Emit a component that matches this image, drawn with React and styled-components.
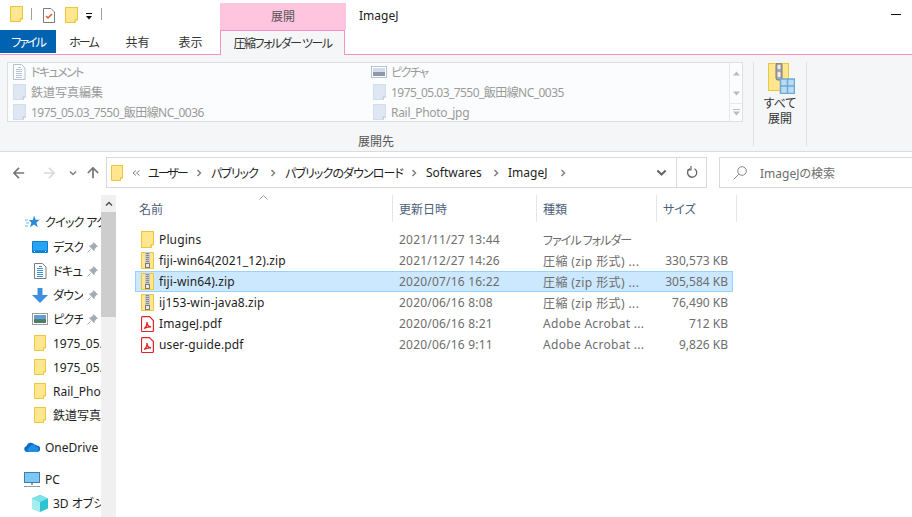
import React from 'react';
import styled, { createGlobalStyle } from 'styled-components';

const GlobalStyle = createGlobalStyle`
    html, body {
        margin: 0;
        padding: 0;
        background: #fff;
        overflow: hidden;
    }
    * {
        box-sizing: border-box;
    }
`;

const FONT = `"Noto Sans", "Noto Sans CJK JP", sans-serif`;

const Page = styled.div`
    width: 912px;
    height: 517px;
    display: flex;
    flex-direction: column;
    overflow: hidden;
    font-family: ${FONT};
    font-size: 12px;
    font-feature-settings: "palt";
    color: #1e1e1e;
    background: #fff;
`;

/* title bar */
const TitleBar = styled.div`
    height: 30px;
    padding-top: 3px;
    display: flex;
    align-items: stretch;
`;

const QuickAccess = styled.div`
    width: 220px;
    padding: 3px 0 0 10px;
    display: flex;
    align-items: flex-start;
`;

const QuickIcon = styled.span`
    display: flex;
    margin-top: ${p => p.$top || 0}px;
    margin-right: ${p => p.$gap || 0}px;
`;

const QuickSep = styled.span`
    width: 1px;
    height: 12px;
    margin-top: 2px;
    background: #a0a0a0;
    margin-right: ${p => p.$gap || 0}px;
`;

const ContextTitle = styled.div`
    width: 126px;
    padding-bottom: 2px;
    background: #ffc4de;
    color: #555;
    display: flex;
    align-items: center;
    justify-content: center;
`;

const WindowTitle = styled.div`
    flex: 1;
    padding: 0 0 2px 13px;
    display: flex;
    align-items: center;
    color: #222;
`;

const Minimize = styled.span`
    width: 10px;
    height: 1px;
    margin: 11px 11px 0 0;
    background: #111;
`;

/* ribbon tabs */
const TabRow = styled.div`
    height: 25px;
    display: flex;
    border-bottom: 1px solid #f890c0;
`;

const FileTab = styled.div`
    width: 56px;
    height: 23px;
    background: #0063b1;
    color: #fff;
    letter-spacing: -2px;
    display: flex;
    align-items: center;
    justify-content: center;
`;

const Tab = styled.div`
    width: ${p => p.$w}px;
    height: 24px;
    color: #333;
    letter-spacing: ${p => p.$tracking || 0}px;
    display: flex;
    align-items: center;
    justify-content: center;
`;

const ActiveTab = styled.div`
    width: 125px;
    height: 25px;
    margin-left: 3px;
    border: 1px solid #f890c0;
    border-bottom: none;
    background: #f5f6f7;
    color: #333;
    white-space: nowrap;
    letter-spacing: -1.5px;
    display: flex;
    align-items: center;
    justify-content: center;
`;

/* ribbon body */
const Ribbon = styled.div`
    height: 97px;
    background: #f5f6f7;
    border-bottom: 1px solid #dadbdc;
    display: flex;
    padding: 7px 0 0 7px;
`;

const ExtractGroup = styled.div`
    width: 746px;
    display: flex;
    flex-direction: column;
`;

const Gallery = styled.div`
    width: 736px;
    height: 60px;
    display: flex;
    background: #fbfcfd;
    border: 1px solid #dcdfe3;
`;

const GalleryList = styled.div`
    flex: 1;
    display: grid;
    grid-template-columns: 360px 1fr;
    grid-auto-rows: 20px;
    margin-top: -1px;
    padding-left: 3px;
`;

const GalleryItem = styled.div`
    display: flex;
    align-items: center;
    gap: 4px;
    color: #9a9a9a;
    white-space: nowrap;
    letter-spacing: ${p => p.$tracking || 0}px;
`;

const GallerySlot = styled.span`
    width: 16px;
    display: flex;
    justify-content: center;
`;

const GalleryScroll = styled.div`
    width: 13px;
    display: flex;
    flex-direction: column;
    border-left: 1px solid #e6e8eb;
    align-items: center;
`;

const ScrollCell = styled.div`
    height: ${p => p.$h}px;
    width: 100%;
    display: flex;
    align-items: center;
    justify-content: center;
    border-top: ${p => (p.$line ? '1px solid #e6e8eb' : 'none')};
`;

const GroupLabel = styled.div`
    flex: 1;
    display: flex;
    align-items: center;
    justify-content: center;
    color: #555;
    padding: 9px 8px 0 0;
`;

const RibbonSep = styled.div`
    width: 1px;
    height: 84px;
    background: #e1e2e4;
`;

const BigButton = styled.div`
    width: 52px;
    padding-top: 1px;
    display: flex;
    flex-direction: column;
    align-items: center;
    color: #333;
    line-height: 15px;
    text-align: center;
`;

const BigIcon = styled.span`
    display: flex;
    margin-left: 3px;
`;

const BigLabel = styled.div`
    margin-top: 2px;
`;

/* address row */
const AddressRow = styled.div`
    height: 43px;
    padding-top: 5px;
    display: flex;
    align-items: flex-start;
`;

const NavButtons = styled.div`
    width: 106px;
    height: 31px;
    padding-left: 13px;
    display: flex;
    align-items: center;
`;

const NavIcon = styled.span`
    display: flex;
    margin-right: ${p => p.$gap || 0}px;
`;

const AddressBox = styled.div`
    width: 601px;
    height: 31px;
    border: 1px solid #d9d9d9;
    display: flex;
    align-items: center;
    padding-left: 4px;
`;

const Crumbs = styled.div`
    flex: 1;
    display: flex;
    align-items: center;
    color: #1e1e1e;
    white-space: nowrap;
`;

const Crumb = styled.span`
    width: ${p => p.$w}px;
    letter-spacing: ${p => p.$tracking || 0}px;
`;

const CrumbArrow = styled.span`
    width: 16px;
    display: flex;
`;

const AddressBtn = styled.div`
    width: ${p => p.$w}px;
    height: 100%;
    display: flex;
    align-items: center;
    justify-content: center;
    border-left: ${p => (p.$line ? '1px solid #d9d9d9' : 'none')};
`;

const SearchBox = styled.div`
    width: 193px;
    height: 31px;
    margin-left: 12px;
    border: 1px solid #d9d9d9;
    border-right: none;
    display: flex;
    align-items: center;
    padding-left: 13px;
    gap: 13px;
    color: #6d6d6d;
`;

/* body */
const Body = styled.div`
    flex: 1;
    min-height: 0;
    display: flex;
`;

const Sidebar = styled.div`
    width: 101px;
    padding-top: 15px;
    overflow: hidden;
    flex-shrink: 0;
`;

const NavItem = styled.div`
    height: 24px;
    margin-top: ${p => p.$top || 0}px;
    padding-left: ${p => p.$indent}px;
    display: flex;
    align-items: center;
    white-space: nowrap;
    color: #1e1e1e;
`;

const NavIconSlot = styled.span`
    width: 16px;
    height: 16px;
    margin-right: 5px;
    display: flex;
    align-items: center;
    justify-content: center;
    flex-shrink: 0;
`;

const NavLabel = styled.span`
    overflow: hidden;
    width: ${p => (p.$w ? `${p.$w}px` : 'auto')};
    flex-shrink: ${p => (p.$w ? 0 : 1)};
    letter-spacing: ${p => p.$tracking || 0}px;
`;

const Pin = styled.span`
    display: flex;
    margin-left: 4px;
`;

const Scrollbar = styled.div`
    width: 15px;
    background: #f0f0f0;
    flex-shrink: 0;
    display: flex;
    flex-direction: column;
`;

const ScrollTop = styled.div`
    height: 17px;
    display: flex;
    align-items: center;
    justify-content: center;
`;

const ScrollThumb = styled.div`
    height: 105px;
    background: #cdcdcd;
`;

const Content = styled.div`
    flex: 1;
    padding: 0 0 0 19px;
    display: flex;
    flex-direction: column;
    position: relative;
`;

const SortCaret = styled.span`
    position: absolute;
    left: 143px;
    top: 0;
    display: flex;
`;

const HeaderRow = styled.div`
    height: 27px;
    display: flex;
    color: #4c607a;
    margin-bottom: 7px;
`;

const HeaderCell = styled.div`
    width: ${p => p.$w}px;
    padding-left: ${p => p.$pad || 6}px;
    display: flex;
    align-items: center;
    border-right: 1px solid #e5e5e5;
`;

const Row = styled.div`
    width: 598px;
    height: 21px;
    display: flex;
    align-items: center;
    border: 1px solid ${p => (p.$selected ? '#99d1ff' : 'transparent')};
    background: ${p => (p.$selected ? '#cce8ff' : 'transparent')};
    white-space: nowrap;
`;

const NameCell = styled.div`
    width: 263px;
    padding-left: 5px;
    display: flex;
    align-items: center;
    gap: 5px;
    color: #1e1e1e;
    letter-spacing: .12px;
`;

const DateCell = styled.div`
    width: 144px;
    color: #6d6d6d;
    letter-spacing: .2px;
`;

const TypeCell = styled.div`
    width: 120px;
    color: #6d6d6d;
    letter-spacing: ${p => p.$tracking || 0}px;
`;

const SizeCell = styled.div`
    width: 65px;
    text-align: right;
    color: #6d6d6d;
`;

/* icons */
const Folder = ({ w = 12, h = 16, pale }) => (
    <svg width={w} height={h} viewBox="0 0 12 16" preserveAspectRatio="none">
        <path
            d="M.5.5h11v12.500h-2v2.500H.5z"
            fill={pale ? '#dfe7f3' : '#ffe68f'}
            stroke={pale ? '#d3ddeb' : '#eac73f'}
        />
        <path d="M9.500 15.500V13h2" fill={pale ? '#f3f6fa' : '#fff3c4'} stroke={pale ? '#bcc9da' : '#eac73f'} />
    </svg>
);

const ZipFolder = () => (
    <svg width="13" height="17" viewBox="0 0 13 17">
        <path d="M.5.5h12v16H.5z" fill="#ffe68f" stroke="#eac73f" />
        <rect x="4" y="0" width="5" height="12" fill="#c9c9c9" />
        <path d="M5 1.500h3M5 3.500h3M5 5.500h3M5 7.500h3M5 9.500h3" stroke="#8a8a8a" />
        <rect x="4.500" y="11.500" width="4" height="4" fill="#e8e8e8" stroke="#7a7a7a" />
    </svg>
);

const PdfIcon = () => (
    <svg width="13" height="16" viewBox="0 0 13 16">
        <path d="M1.500.6h7l3.900 3.900v10a1 1 0 0 1-1 1h-9.900a1 1 0 0 1-1-1v-12.900a1 1 0 0 1 1-1z" fill="#fff" stroke="#e0232b" strokeWidth="1.200" />
        <path d="M3 12.500c2-1 3-3.500 3-6.500 0 2.500 1.800 4.500 4 5-2.200-.3-5 .3-7 1.500z" fill="none" stroke="#e0232b" strokeWidth="1.300" />
    </svg>
);

const CheckDoc = () => (
    <svg width="12" height="15" viewBox="0 0 12 15">
        <path d="M.5.5h7.500l3.500 3.500v10.500H.500z" fill="#fff" stroke="#7c7c7c" />
        <path d="M3 8l2 2 4-4" fill="none" stroke="#e8572a" strokeWidth="1.500" />
    </svg>
);

const DropMark = () => (
    <svg width="6" height="7" viewBox="0 0 6 7">
        <path d="M0 .5h6" stroke="#111" />
        <path d="M0 3h6L3 6.500z" fill="#111" />
    </svg>
);

const DocIcon = ({ pale }) => (
    <svg width="14" height="16" viewBox="0 0 14 16">
        <path d="M1.500.5h8l3.500 3.500v11.500h-11.500z" fill="#fff" stroke={pale ? '#b5bfcd' : '#7c7c7c'} />
        <path d="M6 3.500h3M4 5.500h6M4 7.500h6M4 9.500h6M4 11.500h6M4 13.500h6" stroke={pale ? '#b5c4d8' : '#3d8fd8'} />
    </svg>
);

const PictureIcon = ({ pale }) => (
    <svg width="16" height="12" viewBox="0 0 16 12">
        <rect x=".5" y=".5" width="15" height="11" fill="#fff" stroke={pale ? '#b8c3d2' : '#9a9a9a'} />
        <rect x="2" y="2" width="12" height="4" fill={pale ? '#d4dce8' : '#5f9fd6'} />
        <rect x="2" y="6" width="12" height="4" fill={pale ? '#8d99aa' : '#4e7d68'} />
    </svg>
);

const StarIcon = () => (
    <svg width="15" height="14" viewBox="0 0 15 14">
        <path d="M9 .5l1.600 4.300h4.200l-3.400 2.800 1.300 4.600L9 9.500l-3.900 2.700 1.300-4.600L3.800 5h4z" fill="#2a8ad8" />
        <path d="M0 5h3M1 8h3M0 11h3" stroke="#6fb4e8" />
    </svg>
);

const DesktopIcon = () => (
    <svg width="16" height="12" viewBox="0 0 16 12">
        <rect width="16" height="12" rx="1" fill="#0a7fd6" />
        <rect x="1" y="1" width="14" height="8.500" fill="#29a3f3" />
        <path d="M2 10.500h1M13 10.500h1" stroke="#cfeafc" />
    </svg>
);

const DownloadIcon = () => (
    <svg width="16" height="15" viewBox="0 0 16 15">
        <path d="M5.500 0h5v7H16l-8 8-8-8h5.500z" fill="#3f8fe0" />
    </svg>
);

const PinIcon = () => (
    <svg width="11" height="11" viewBox="0 0 11 11">
        <path d="M6.500 0L11 4.500 9.500 5 7.500 7.500 7.500 9.500 1.500 3.500 3.500 3.500 6 1.500z" fill="#a3acb5" />
        <path d="M3.500 7.500L.500 10.500" stroke="#a3acb5" />
    </svg>
);

const CloudIcon = () => (
    <svg width="16" height="10" viewBox="0 0 16 10">
        <path d="M3 10a3 3 0 0 1-.5-5.900A4.500 4.500 0 0 1 10.500 2.500 3.500 3.500 0 0 1 13 3.600 3.200 3.200 0 0 1 13 10z" fill="#0f6cc4" />
        <path d="M5 10a2.500 2.500 0 0 1 .5-4.800 3.500 3.500 0 0 1 6.300-1A3.200 3.200 0 0 1 13 10z" fill="#1f8fe0" />
    </svg>
);

const PcIcon = () => (
    <svg width="16" height="15" viewBox="0 0 16 15">
        <rect x=".5" y=".5" width="15" height="10" fill="#7cc8f5" stroke="#3d7fa8" />
        <path d="M8 11v2" stroke="#8a9aa8" strokeWidth="2" />
        <path d="M0 14.500h16" stroke="#8a9aa8" />
    </svg>
);

const CubeIcon = () => (
    <svg width="16" height="17" viewBox="0 0 16 17">
        <path d="M8 0l8 3.500v10L8 17l-8-3.500v-10z" fill="#2ec4cf" />
        <path d="M8 0l8 3.500L8 7 0 3.500z" fill="#7de3e8" />
        <path d="M8 7v10L0 13.500v-10z" fill="#a5eef0" />
    </svg>
);

const Extract = () => (
    <svg width="27" height="31" viewBox="0 0 27 31">
        <rect x=".5" y=".5" width="20" height="27" fill="#ffe68f" stroke="#eac73f" />
        <rect x="8" y="0" width="6" height="17" rx="2" fill="#a8a8a8" stroke="#777" />
        <rect x="9.500" y="2" width="3" height="4" rx="1" fill="#eee" />
        <rect x="9.500" y="9" width="3" height="5" rx="1" fill="#eee" />
        <path d="M12.500 16h14v14.500h-14zM19.500 16v14.500M12.500 23h14" fill="#b9dcf5" stroke="#6fa8d4" strokeWidth="1.500" />
    </svg>
);

const Tri = ({ up, wide }) => (
    <svg width="7" height="7" viewBox="0 0 7 7">
        {wide && <path d="M0 .5h7" stroke="#b8bcc2" />}
        <path d={up ? 'M3.500 1.500L7 5.500H0z' : wide ? 'M0 2.500h7L3.500 6.500z' : 'M0 1.500h7L3.500 5.500z'} fill="#b8bcc2" />
    </svg>
);

const Arrow = ({ dir = 'left', color = '#757575', size = 12 }) => {
    const paths = {
        left: 'M13 7H1M7 1L1 7l6 6',
        right: 'M1 7h12M7 1l6 6-6 6',
        up: 'M7 13V1M1 7l6-6 6 6',
    };
    return (
        <svg width={size} height={size} viewBox="0 0 14 14">
            <path d={paths[dir]} fill="none" stroke={color} strokeWidth="2" />
        </svg>
    );
};

const Chevron = ({ color = '#808080', dir = 'down', w = 8, h = 8 }) => (
    <svg width={w} height={h} viewBox="0 0 8 8">
        <path
            d={dir === 'down' ? 'M1 2.500l3 3 3-3' : dir === 'up' ? 'M1 5.500l3-3 3 3' : 'M2.500 1l3 3-3 3'}
            fill="none"
            stroke={color}
            strokeWidth="1.500"
        />
    </svg>
);

const DoubleLeft = () => (
    <svg width="8" height="8" viewBox="0 0 8 8">
        <path d="M4 1.500L1 4l3 2.500M7.500 1.500L4.500 4l3 2.500" fill="none" stroke="#808080" />
    </svg>
);

const Refresh = () => (
    <svg width="12" height="13" viewBox="0 0 12 13">
        <path d="M4 2.600a4.600 4.600 0 1 0 4.500 .100" fill="none" stroke="#666" strokeWidth="1.300" />
        <path d="M4 0v4H0" fill="none" stroke="#666" strokeWidth="1.200" transform="translate(1 0)" />
    </svg>
);

const SearchGlass = () => (
    <svg width="14" height="14" viewBox="0 0 14 14">
        <circle cx="9" cy="5" r="4.300" fill="none" stroke="#858585" />
        <path d="M5.800 8.200L.700 13.300" stroke="#858585" />
    </svg>
);

const Caret = () => (
    <svg width="9" height="5" viewBox="0 0 9 5">
        <path d="M.500 4.500l4-4 4 4" fill="none" stroke="#9a9a9a" />
    </svg>
);

const galleryItems = [
    { icon: <DocIcon pale />, text: 'ドキュメント', tracking: -1.6 },
    { icon: <PictureIcon pale />, text: 'ピクチャ', tracking: -1.5 },
    { icon: <Folder w={13} h={16} pale />, text: '鉄道写真編集' },
    { icon: <Folder w={13} h={16} pale />, text: '1975_05.03_7550_飯田線NC_0035', tracking: -0.55 },
    { icon: <Folder w={13} h={16} pale />, text: '1975_05.03_7550_飯田線NC_0036', tracking: -0.55 },
    { icon: <Folder w={13} h={16} pale />, text: 'Rail_Photo_jpg', tracking: -0.3 },
];

const crumbs = [
    { text: 'ユーザー', w: 47, tracking: -2 },
    { text: 'パブリック', w: 58, tracking: -1 },
    { text: 'パブリックのダウンロード', w: 125, tracking: -0.9 },
    { text: 'Softwares', w: 66 },
    { text: 'ImageJ', w: 51 },
];

const navItems = [
    { icon: <StarIcon />, text: 'クイック アクセス', indent: 24, tracking: -0.7 },
    { icon: <DesktopIcon />, text: 'デスクトップ', indent: 32, pin: true, labelW: 30, top: 1, tracking: -0.7 },
    { icon: <DocIcon />, text: 'ドキュメント', indent: 32, pin: true, labelW: 30, tracking: -0.7 },
    { icon: <DownloadIcon />, text: 'ダウンロード', indent: 32, pin: true, labelW: 30, tracking: -0.7 },
    { icon: <PictureIcon />, text: 'ピクチャ', indent: 32, pin: true, labelW: 30, tracking: -0.7 },
    { icon: <Folder />, text: '1975_05.03_7550_飯田線NC_0035', indent: 32 },
    { icon: <Folder />, text: '1975_05.03_7550_飯田線NC_0036', indent: 32 },
    { icon: <Folder />, text: 'Rail_Photo_jpg', indent: 32 },
    { icon: <Folder />, text: '鉄道写真編集', indent: 32 },
    { icon: <CloudIcon />, text: 'OneDrive', indent: 24, top: 8 },
    { icon: <PcIcon />, text: 'PC', indent: 24, top: 8 },
    { icon: <CubeIcon />, text: '3D オブジェクト', indent: 32 },
];

const files = [
    { icon: <Folder w={13} h={17} />, name: 'Plugins', date: '2021/11/27 13:44', type: 'ファイル フォルダー', tracking: -1, size: '' },
    { icon: <ZipFolder />, name: 'fiji-win64(2021_12).zip', date: '2021/12/27 14:26', type: '圧縮 (zip 形式) ...', tracking: 0.4, size: '330,573 KB' },
    { icon: <ZipFolder />, name: 'fiji-win64).zip', date: '2020/07/16 16:22', type: '圧縮 (zip 形式) ...', tracking: 0.4, size: '305,584 KB', selected: true },
    { icon: <ZipFolder />, name: 'ij153-win-java8.zip', date: '2020/06/16 8:08', type: '圧縮 (zip 形式) ...', tracking: 0.4, size: '76,490 KB' },
    { icon: <PdfIcon />, name: 'ImageJ.pdf', date: '2020/06/16 8:21', type: 'Adobe Acrobat ...', tracking: 0.3, size: '712 KB' },
    { icon: <PdfIcon />, name: 'user-guide.pdf', date: '2020/06/16 9:11', type: 'Adobe Acrobat ...', tracking: 0.3, size: '9,826 KB' },
];

function App() {
    return (
        <Page>
            <GlobalStyle />
            <TitleBar>
                <QuickAccess>
                    <QuickIcon $gap={8}><Folder w={13} h={16} /></QuickIcon>
                    <QuickSep $gap={11} />
                    <QuickIcon $top={2} $gap={10}><CheckDoc /></QuickIcon>
                    <QuickIcon $top={1} $gap={8}><Folder w={13} h={16} /></QuickIcon>
                    <QuickIcon $top={7} $gap={9}><DropMark /></QuickIcon>
                    <QuickSep />
                </QuickAccess>
                <ContextTitle>展開</ContextTitle>
                <WindowTitle>ImageJ</WindowTitle>
                <Minimize />
            </TitleBar>

            <TabRow>
                <FileTab>ファイル</FileTab>
                <Tab $w={55} $tracking={-2}>ホーム</Tab>
                <Tab $w={53}>共有</Tab>
                <Tab $w={53}>表示</Tab>
                <ActiveTab>圧縮フォルダー ツール</ActiveTab>
            </TabRow>

            <Ribbon>
                <ExtractGroup>
                    <Gallery>
                        <GalleryList>
                            {galleryItems.map(item => (
                                <GalleryItem key={item.text} $tracking={item.tracking}>
                                    <GallerySlot>{item.icon}</GallerySlot>
                                    <span>{item.text}</span>
                                </GalleryItem>
                            ))}
                        </GalleryList>
                        <GalleryScroll>
                            <ScrollCell $h={20}><Tri up /></ScrollCell>
                            <ScrollCell $h={20}><Tri /></ScrollCell>
                            <ScrollCell $h={18} $line><Tri wide /></ScrollCell>
                        </GalleryScroll>
                    </Gallery>
                    <GroupLabel>展開先</GroupLabel>
                </ExtractGroup>
                <RibbonSep />
                <BigButton>
                    <BigIcon><Extract /></BigIcon>
                    <BigLabel>すべて<br />展開</BigLabel>
                </BigButton>
                <RibbonSep />
            </Ribbon>

            <AddressRow>
                <NavButtons>
                    <NavIcon $gap={18}><Arrow dir="left" /></NavIcon>
                    <NavIcon $gap={14}><Arrow dir="right" color="#d9d9d9" /></NavIcon>
                    <NavIcon $gap={10}><Chevron /></NavIcon>
                    <NavIcon><Arrow dir="up" /></NavIcon>
                </NavButtons>
                <AddressBox>
                    <Crumbs>
                        <Folder w={12} h={16} />
                        <Crumb $w={9} />
                        <DoubleLeft />
                        <Crumb $w={8} />
                        {crumbs.map(c => (
                            <React.Fragment key={c.text}>
                                <Crumb $w={c.w} $tracking={c.tracking}>{c.text}</Crumb>
                                <CrumbArrow><Chevron dir="right" /></CrumbArrow>
                            </React.Fragment>
                        ))}
                    </Crumbs>
                    <AddressBtn $w={29}><Chevron color="#666" w={11} h={11} /></AddressBtn>
                    <AddressBtn $w={30} $line><Refresh /></AddressBtn>
                </AddressBox>
                <SearchBox>
                    <SearchGlass />
                    <span>ImageJの検索</span>
                </SearchBox>
            </AddressRow>

            <Body>
                <Sidebar>
                    {navItems.map(item => (
                        <NavItem key={item.text} $indent={item.indent} $top={item.top}>
                            <NavIconSlot>{item.icon}</NavIconSlot>
                            <NavLabel $w={item.labelW} $tracking={item.tracking}>{item.text}</NavLabel>
                            {item.pin && <Pin><PinIcon /></Pin>}
                        </NavItem>
                    ))}
                </Sidebar>
                <Scrollbar>
                    <ScrollTop><Chevron color="#505050" dir="up" /></ScrollTop>
                    <ScrollThumb />
                </Scrollbar>
                <Content>
                    <SortCaret><Caret /></SortCaret>
                    <HeaderRow>
                        <HeaderCell $w={258} $pad={4}>名前</HeaderCell>
                        <HeaderCell $w={144}>更新日時</HeaderCell>
                        <HeaderCell $w={120}>種類</HeaderCell>
                        <HeaderCell $w={80}>サイズ</HeaderCell>
                    </HeaderRow>
                    {files.map(f => (
                        <Row key={f.name} $selected={f.selected}>
                            <NameCell>{f.icon}<span>{f.name}</span></NameCell>
                            <DateCell>{f.date}</DateCell>
                            <TypeCell $tracking={f.tracking}>{f.type}</TypeCell>
                            <SizeCell>{f.size}</SizeCell>
                        </Row>
                    ))}
                </Content>
            </Body>
        </Page>
    );
}

export default App;
